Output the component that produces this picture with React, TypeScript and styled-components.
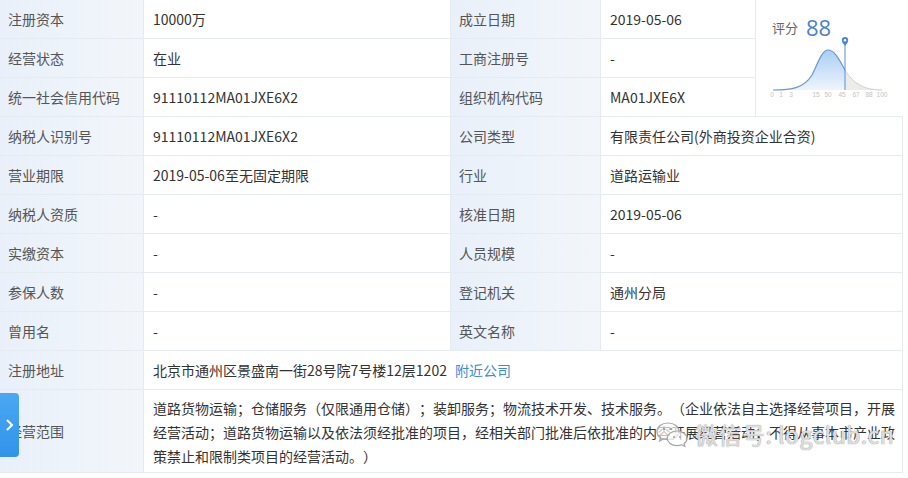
import React from 'react';
import styled, { createGlobalStyle } from 'styled-components';

const GlobalStyle = createGlobalStyle`
  html, body {
    margin: 0;
    padding: 0;
    background: #ffffff;
  }
  body {
    font-family: "Noto Sans CJK SC", "Noto Sans", sans-serif;
    text-spacing-trim: space-all;
  }
`;

const Page = styled.div`
  width: 908px;
  height: 478px;
  overflow: hidden;
  position: relative;
  background: #fff;
`;

const Table = styled.div`
  display: grid;
  grid-template-columns: 144px 307px 150px 155px 147px;
  grid-auto-rows: 39px;
  width: 903px;
  border-right: 1px solid #e6ebf1;
  box-sizing: border-box;
  font-size: 14px;
  position: relative;
`;

const Cell = styled.div<{ $span?: number }>`
  grid-column: span ${({ $span }) => $span ?? 1};
  display: flex;
  align-items: center;
  padding: 0 9px;
  border-bottom: 1px solid #e6ebf1;
  border-right: 1px solid #e6ebf1;
  box-sizing: border-box;
  white-space: nowrap;
`;

const Label = styled(Cell)<{ $tall?: boolean }>`
  background: linear-gradient(90deg, #e9f0f9 0%, #f2f6fb 100%);
  color: #555;
  padding-left: 8px;
  height: ${({ $tall }) => ($tall ? '83px' : 'auto')};
`;

const Value = styled(Cell)`
  background: #fff;
  color: #333;
`;

const LongValue = styled(Value)`
  white-space: normal;
  line-height: 24px;
  height: 83px;
  padding: 6px 3px 5px 9px;
  align-items: flex-start;
  text-spacing-trim: space-all;
`;

const Link = styled.span`
  color: #3b8bd6;
  margin-left: 8px;
`;

const ScoreCell = styled.div`
  grid-column: 5;
  grid-row: 1 / span 3;
  border-bottom: 1px solid #e6ebf1;
  box-sizing: border-box;
  padding: 16px 0 0 14px;
  display: flex;
  flex-direction: column;
  background: #fff;
`;

const ScoreHead = styled.div`
  display: flex;
  align-items: center;
  gap: 8px;
  height: 22px;
  padding-left: 2px;
`;

const ScoreLabel = styled.span`
  font-size: 13px;
  color: #666;
`;

const ScoreNum = styled.span`
  font-family: "Open Sans", "Noto Sans", sans-serif;
  font-size: 22px;
  color: #4a7fd0;
  line-height: 22px;
`;

const Chart = styled.svg`
  display: block;
  margin-top: -3px;
`;

const Tab = styled.div`
  position: absolute;
  left: 0;
  top: 393px;
  width: 19px;
  height: 64px;
  border-radius: 0 4px 4px 0;
  background: linear-gradient(180deg, #4aa8f3 0%, #3193ea 100%);
  display: flex;
  align-items: center;
  justify-content: center;
`;

const Watermark = styled.div`
  position: absolute;
  left: 655px;
  top: 417px;
  display: flex;
  align-items: center;
  gap: 6px;
  pointer-events: none;
`;

const WatermarkText = styled.span`
  font-size: 23px;
  color: rgba(255, 255, 255, 0.7);
  text-shadow: 0 0 1px #9a9a9a, 0 0 1px #9a9a9a;
  letter-spacing: 0.5px;
`;

const rows: [string, string, string, string][] = [
  ['注册资本', '10000万', '成立日期', '2019-05-06'],
  ['经营状态', '在业', '工商注册号', '-'],
  ['统一社会信用代码', '91110112MA01JXE6X2', '组织机构代码', 'MA01JXE6X'],
  ['纳税人识别号', '91110112MA01JXE6X2', '公司类型', '有限责任公司(外商投资企业合资)'],
  ['营业期限', '2019-05-06至无固定期限', '行业', '道路运输业'],
  ['纳税人资质', '-', '核准日期', '2019-05-06'],
  ['实缴资本', '-', '人员规模', '-'],
  ['参保人数', '-', '登记机关', '通州分局'],
  ['曾用名', '-', '英文名称', '-'],
];

const curve =
  'M3,55 C22,55 34,53 42,40 C48,28 52,15 58,15 C65,15 70,26 75,35 C84,50 96,55 112,55';

const ticks: [string, number][] = [
  ['0', 2], ['1', 11], ['3', 21], ['15', 46], ['50', 58],
  ['45', 72], ['67', 86], ['88', 99], ['100', 112],
];

const ScoreChart = () => (
  <Chart width="122" height="68" viewBox="0 0 122 68">
    <defs>
      <linearGradient id="blueFill" x1="0" y1="0" x2="0" y2="1">
        <stop offset="0" stopColor="#a9cdf3" />
        <stop offset="1" stopColor="#eef5fd" />
      </linearGradient>
      <clipPath id="leftClip">
        <rect x="0" y="0" width="75" height="60" />
      </clipPath>
      <clipPath id="rightClip">
        <rect x="75" y="0" width="47" height="60" />
      </clipPath>
    </defs>
    <path d={`${curve} L112,55 L3,55 Z`} fill="url(#blueFill)" clipPath="url(#leftClip)" />
    <path d={`${curve} L112,55 L3,55 Z`} fill="#ececec" clipPath="url(#rightClip)" />
    <path d={curve} fill="none" stroke="#6b97d3" strokeWidth="1.2" clipPath="url(#leftClip)" />
    <path d={curve} fill="none" stroke="#cfcfcf" strokeWidth="1" clipPath="url(#rightClip)" />
    <line x1="75" y1="6" x2="75" y2="55" stroke="#5a8fd6" strokeWidth="1" />
    <path d="M75,11 C73,8.5 71.8,7 71.8,5.2 A3.2,3.2 0 0 1 78.2,5.2 C78.2,7 77,8.5 75,11 Z" fill="#4a85d8" />
    <circle cx="75" cy="5.2" r="1.2" fill="#fff" />
    {ticks.map(([t, x]) => (
      <text key={t + x} x={x} y="62" fontSize="6.5" fill="#c4c4c4" textAnchor="middle" fontFamily="Liberation Sans, sans-serif">
        {t}
      </text>
    ))}
  </Chart>
);

const WeChatIcon = () => (
  <svg width="34" height="28" viewBox="0 0 34 28">
    <g fill="rgba(255,255,255,0.7)" stroke="#a5a5a5" strokeWidth="1.2">
      <path d="M13,3 C6.5,3 2,7 2,11.5 C2,14 3.4,16.2 5.6,17.7 L4.6,21 L8.4,19 C9.8,19.4 11.3,19.7 13,19.7 C19.5,19.7 24,15.8 24,11.4 C24,7 19.5,3 13,3 Z" />
      <path d="M22,11 C27.5,11 32,14.3 32,18.4 C32,20.6 30.8,22.4 29,23.7 L29.8,26.4 L26.6,24.8 C25.2,25.3 23.7,25.6 22,25.6 C16.5,25.6 12.2,22.4 12.2,18.3 C12.2,14.3 16.5,11 22,11 Z" />
    </g>
    <circle cx="9" cy="9" r="1.3" fill="#a5a5a5" />
    <circle cx="16" cy="9" r="1.3" fill="#a5a5a5" />
    <circle cx="19" cy="17" r="1.1" fill="#a5a5a5" />
    <circle cx="25" cy="17" r="1.1" fill="#a5a5a5" />
  </svg>
);

export default function App() {
  return (
    <Page>
      <GlobalStyle />
      <Table>
        {rows.map(([l1, v1, l2, v2], i) => (
          <React.Fragment key={l1}>
            <Label>{l1}</Label>
            <Value>{v1}</Value>
            <Label>{l2}</Label>
            <Value $span={i < 3 ? 1 : 2}>{v2}</Value>
            {i === 0 && (
              <ScoreCell>
                <ScoreHead>
                  <ScoreLabel>评分</ScoreLabel>
                  <ScoreNum>88</ScoreNum>
                </ScoreHead>
                <ScoreChart />
              </ScoreCell>
            )}
          </React.Fragment>
        ))}
        <Label>注册地址</Label>
        <Value $span={4}>
          北京市通州区景盛南一街28号院7号楼12层1202
          <Link>附近公司</Link>
        </Value>
        <Label $tall>经营范围</Label>
        <LongValue $span={4}>
          道路货物运输；仓储服务（仅限通用仓储）；装卸服务；物流技术开发、技术服务。（企业依法自主选择经营项目，开展经营活动；道路货物运输以及依法须经批准的项目，经相关部门批准后依批准的内容开展经营活动；不得从事本市产业政策禁止和限制类项目的经营活动。）
        </LongValue>
      </Table>
      <Tab>
        <svg width="9" height="14" viewBox="0 0 9 14">
          <path d="M2,2 L7,7 L2,12" fill="none" stroke="#fff" strokeWidth="2" />
        </svg>
      </Tab>
      <Watermark>
        <WeChatIcon />
        <WatermarkText>微信号: logclub.cn</WatermarkText>
      </Watermark>
    </Page>
  );
}
